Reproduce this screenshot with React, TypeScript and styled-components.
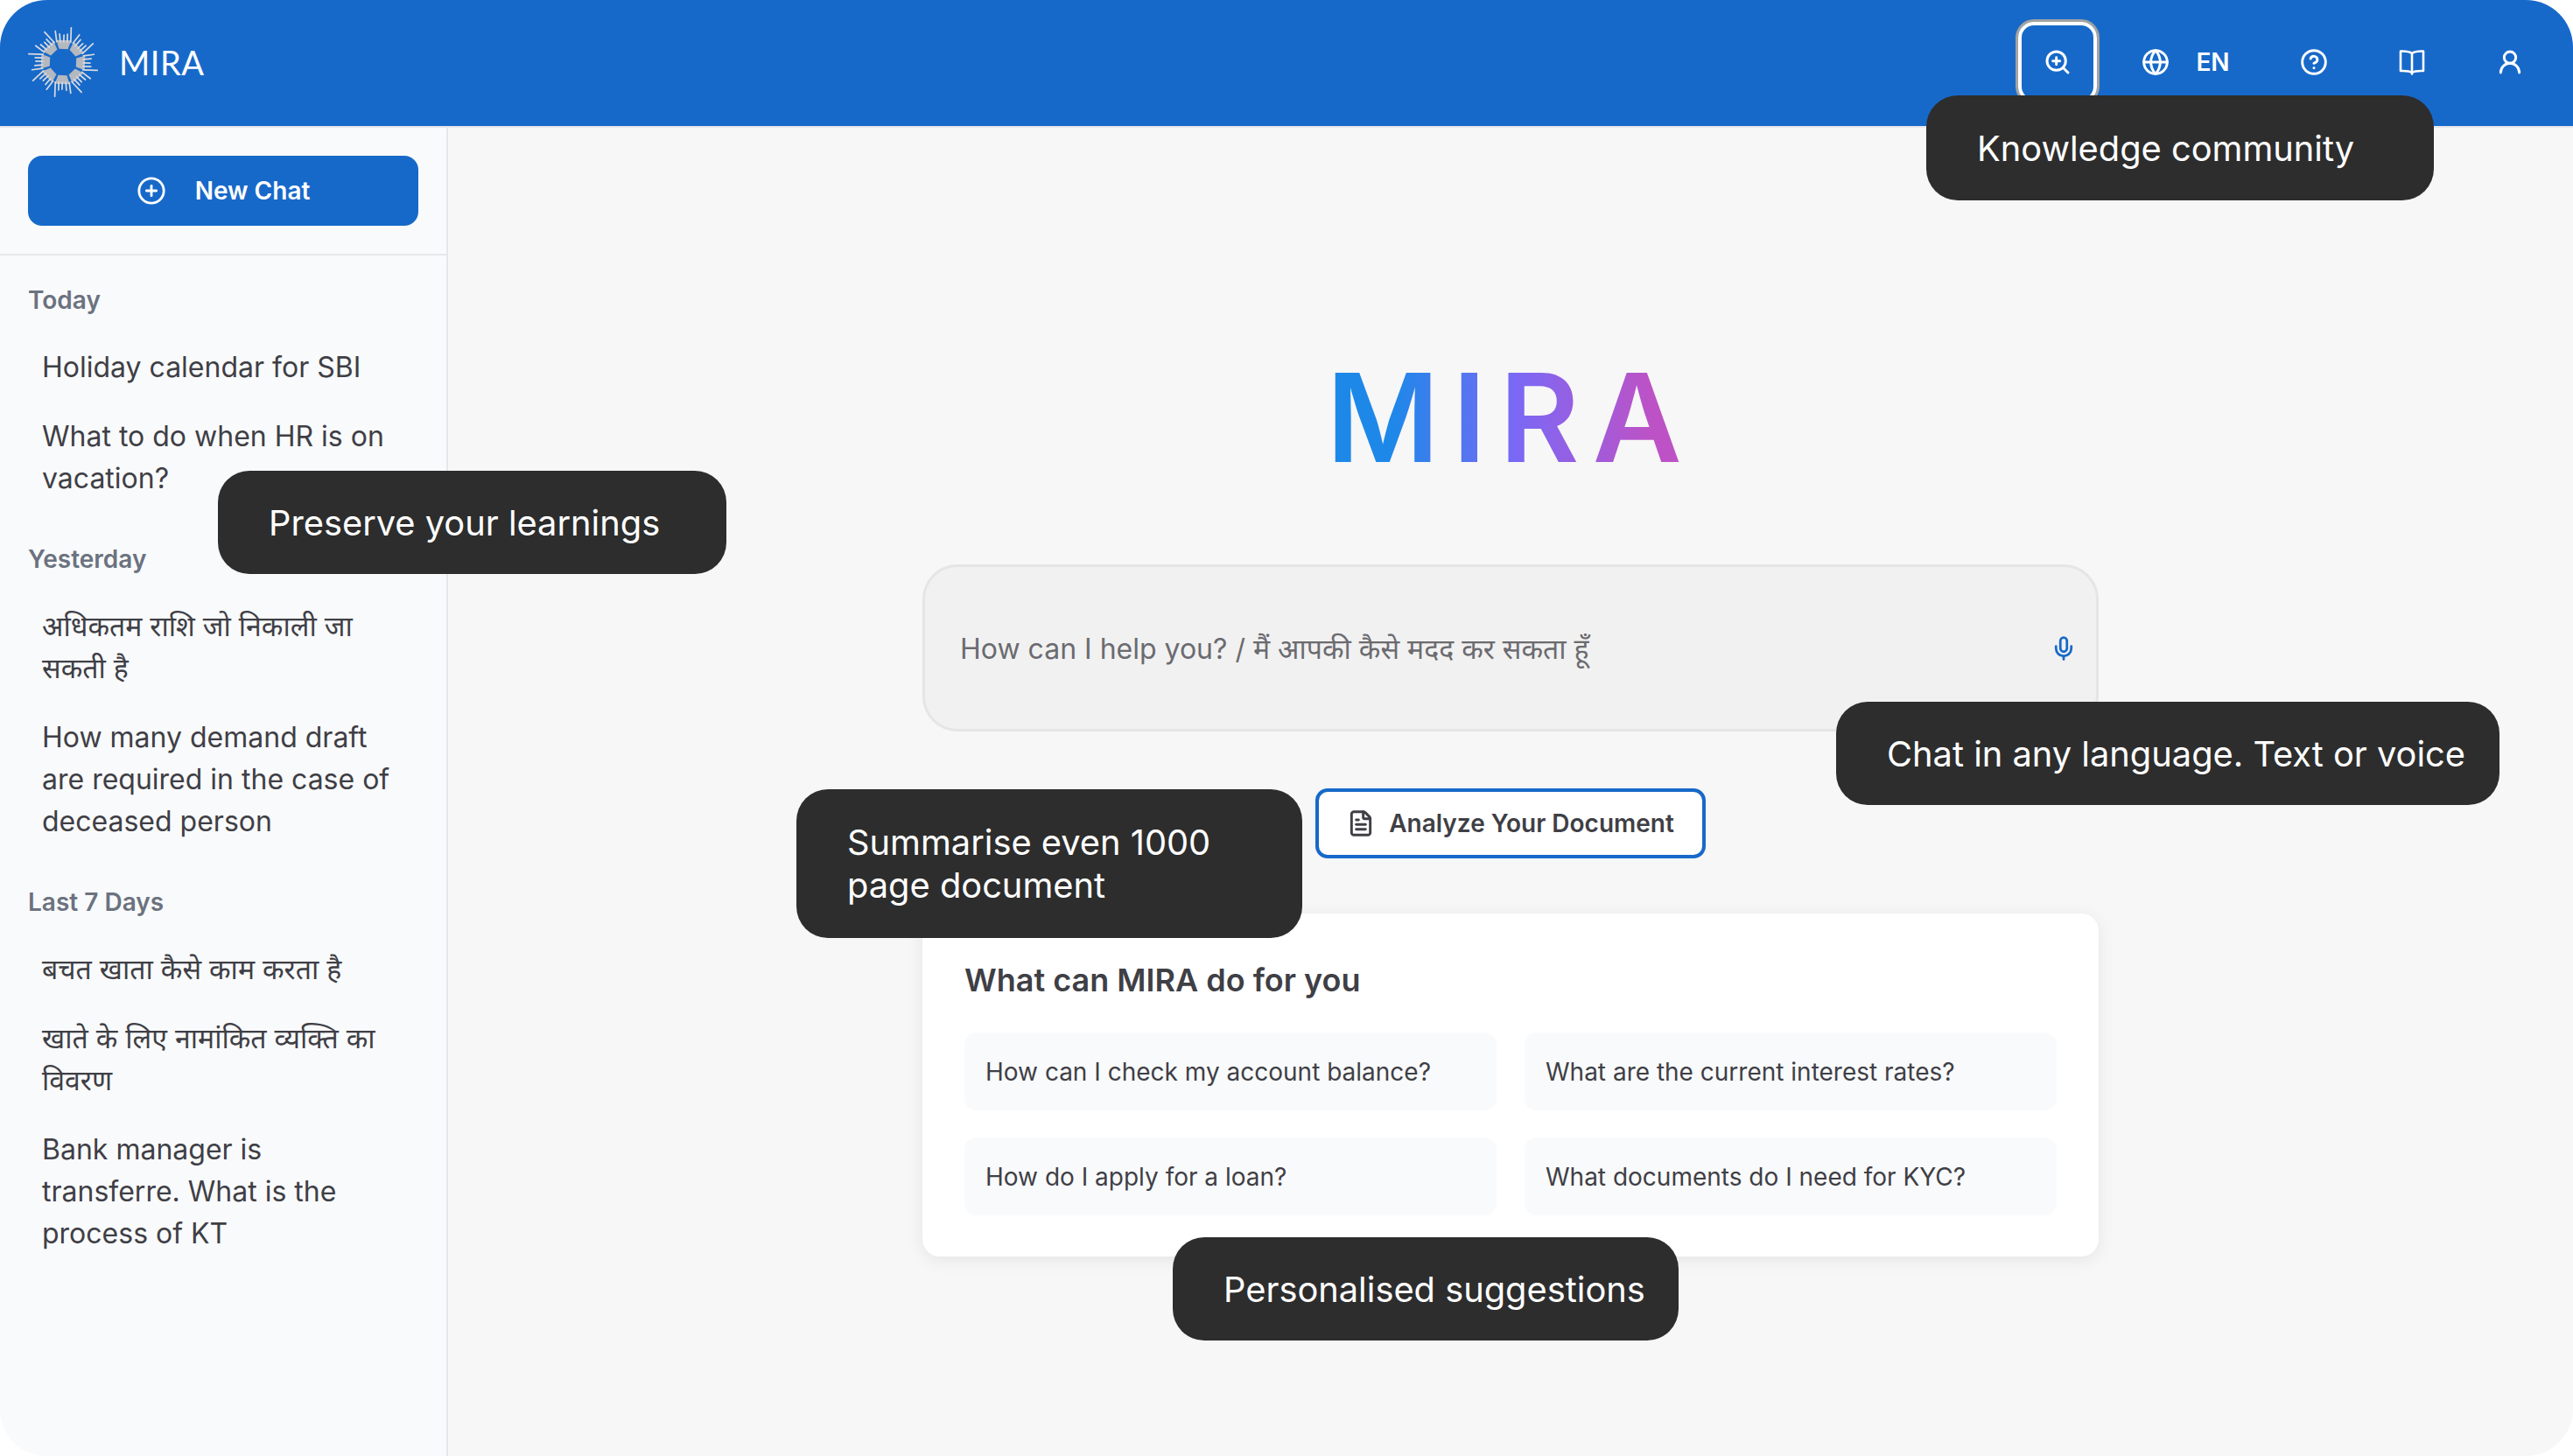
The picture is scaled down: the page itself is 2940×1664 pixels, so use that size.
import styled, { createGlobalStyle } from "styled-components";
import {
  CirclePlus,
  CircleHelp,
  FileText,
  Globe,
  Mic,
  UserRound,
  ZoomIn,
} from "lucide-react";

const GlobalStyle = createGlobalStyle`
  html, body {
    margin: 0;
    padding: 0;
    background: #ffffff;
  }
  * {
    box-sizing: border-box;
  }
`;

const Frame = styled.div`
  position: relative;
  width: 2940px;
  height: 1664px;
  border-radius: 54px;
  overflow: hidden;
  display: flex;
  flex-direction: column;
  background: #f7f7f7;
  font-family: Inter, "Noto Sans", "Noto Sans Devanagari", "Liberation Sans", sans-serif;
  color: #3f3f46;
`;

const Header = styled.header`
  height: 146px;
  flex: none;
  background: #1769c9;
  border-bottom: 2px solid #e5e7eb;
  display: flex;
  align-items: center;
  justify-content: space-between;
  padding: 0 26px 2px 32px;
`;

const Brand = styled.div`
  display: flex;
  align-items: center;
  gap: 24px;
`;

const BrandName = styled.span`
  font-family: Lato, sans-serif;
  font-size: 38px;
  font-weight: 400;
  line-height: 1;
  letter-spacing: 0.5px;
  color: #ffffff;
`;

const Nav = styled.nav`
  display: flex;
  align-items: center;
  gap: 20px;
`;

const NavButton = styled.button<{ $focused?: boolean; $wide?: boolean }>`
  width: ${(p) => (p.$wide ? "161px" : p.$focused ? "90px" : "92px")};
  height: ${(p) => (p.$focused ? "92px" : "96px")};
  margin: ${(p) => (p.$focused ? "0 1px" : "0")};
  display: flex;
  align-items: center;
  justify-content: center;
  gap: 30px;
  padding: 0;
  background: transparent;
  color: #ffffff;
  font-family: inherit;
  border: 4px solid ${(p) => (p.$focused ? "#ffffff" : "transparent")};
  border-radius: 18px;
  box-shadow: ${(p) => (p.$focused ? "0 0 0 3px #a3a3a3" : "none")};
`;

const LangLabel = styled.span`
  font-size: 28px;
  font-weight: 600;
`;

const Body = styled.div`
  flex: 1;
  min-height: 0;
  display: flex;
`;

const Sidebar = styled.aside`
  width: 512px;
  flex: none;
  background: #f9fafb;
  border-right: 2px solid #e5e7eb;
  display: flex;
  flex-direction: column;
`;

const SidebarTop = styled.div`
  height: 146px;
  padding: 32px 32px 0;
  border-bottom: 2px solid #e5e7eb;
`;

const NewChatButton = styled.button`
  width: 446px;
  height: 80px;
  display: flex;
  align-items: center;
  justify-content: center;
  gap: 33px;
  border: none;
  border-radius: 16px;
  background: #1769c9;
  color: #ffffff;
  font-family: inherit;
  font-size: 28px;
  font-weight: 600;
`;

const History = styled.div`
  padding: 31px 32px 0;
  display: flex;
  flex-direction: column;
  gap: 48px;
`;

const HistoryGroup = styled.section`
  display: flex;
  flex-direction: column;
`;

const GroupLabel = styled.h3`
  margin: 0 0 33px;
  font-size: 28px;
  line-height: 40px;
  font-weight: 600;
  color: #6b7280;
`;

const HistoryList = styled.div`
  display: flex;
  flex-direction: column;
  gap: 31px;
`;

const HistoryItem = styled.div`
  padding: 0 16px;
  font-size: 32px;
  line-height: 48px;
  color: #3f3f46;
`;

const Main = styled.main`
  flex: 1;
  min-width: 0;
  display: flex;
  flex-direction: column;
  align-items: center;
  padding-top: 246px;
`;

const Title = styled.h1`
  margin: 0;
  font-size: 140px;
  line-height: 170px;
  font-weight: 600;
  letter-spacing: 15px;
  background: linear-gradient(90deg, #1e88e9 18%, #7b68f5 52%, #bd52c6 88%);
  -webkit-background-clip: text;
  background-clip: text;
  color: transparent;
`;

const SearchBox = styled.div`
  width: 1344px;
  height: 191px;
  margin-top: 83px;
  padding: 0 22px 0 40px;
  display: flex;
  align-items: center;
  justify-content: space-between;
  background: #f1f1f1;
  border: 3px solid #e5e5e5;
  border-radius: 40px;
  color: #1769c9;
`;

const Placeholder = styled.span`
  font-size: 32px;
  color: #6b6b70;
`;

const AnalyzeButton = styled.button`
  width: 446px;
  height: 80px;
  margin-top: 65px;
  display: flex;
  align-items: center;
  justify-content: center;
  gap: 16px;
  background: #ffffff;
  border: 4px solid #1769c9;
  border-radius: 14px;
  color: #3f3f46;
  font-family: inherit;
  font-size: 28px;
  font-weight: 600;
`;

const SuggestionCard = styled.section`
  width: 1344px;
  height: 392px;
  margin-top: 63px;
  padding: 52px 48px 0;
  background: #ffffff;
  border-radius: 20px;
  box-shadow: 0 4px 20px rgba(0, 0, 0, 0.08);
`;

const CardTitle = styled.h2`
  margin: 0 0 36px;
  font-size: 36px;
  line-height: 48px;
  font-weight: 600;
  color: #3f3f46;
`;

const SuggestionGrid = styled.div`
  display: grid;
  grid-template-columns: 1fr 1fr;
  gap: 31px 32px;
`;

const Suggestion = styled.div`
  height: 89px;
  display: flex;
  align-items: center;
  padding: 0 24px;
  background: #f9fafb;
  border-radius: 14px;
  font-size: 28px;
  color: #3f3f46;
`;

const Tooltip = styled.div<{ $x: number; $y: number; $w: number; $h: number }>`
  position: absolute;
  left: ${(p) => p.$x}px;
  top: ${(p) => p.$y}px;
  width: ${(p) => p.$w}px;
  height: ${(p) => p.$h}px;
  display: flex;
  align-items: center;
  padding: 0 30px 0 58px;
  background: #2d2d2d;
  border-radius: 36px;
  color: #ffffff;
  font-size: 39.8px;
  line-height: 49px;
`;

// logo: eight little hands around a ring
function BrandMark() {
  const angles = [0, 45, 90, 135, 180, 225, 270, 315];
  const fingers = [
    { x1: 32, y1: 17, x2: 30, y2: 5 },
    { x1: 36, y1: 17, x2: 35, y2: 8 },
    { x1: 40, y1: 17, x2: 40, y2: 9 },
    { x1: 44, y1: 17, x2: 44, y2: 8 },
    { x1: 48, y1: 17, x2: 48, y2: 0.5 },
  ];
  return (
    <svg width="80" height="80" viewBox="0 0 80 80">
      {angles.map((a) => (
        <g key={a} transform={`rotate(${a + 2} 40 40)`}>
          <path d="M35 25 L45 25 L48.5 15 L31.5 15 Z" fill="#b4b8bf" />
          {fingers.map((f) => (
            <line
              key={f.x1}
              x1={f.x1}
              y1={f.y1}
              x2={f.x2}
              y2={f.y2}
              stroke="#d8dbe0"
              strokeWidth="1.7"
              strokeLinecap="round"
            />
          ))}
        </g>
      ))}
    </svg>
  );
}

// flat open book, the lucide one is too slanted
function BookIcon() {
  return (
    <svg width="32" height="32" viewBox="0 0 32 32" fill="none" stroke="currentColor" strokeWidth="2.6" strokeLinejoin="round" strokeLinecap="round">
      <path d="M16 6 C13 3.8 8 3.4 3 3.6 V26 C8 25.8 13 26 16 28 C19 26 24 25.8 29 26 V3.6 C24 3.4 19 3.8 16 6 Z" />
      <path d="M16 6 V29.5" />
    </svg>
  );
}

const history = [
  { label: "Today", items: ["Holiday calendar for SBI", "What to do when HR is on vacation?"] },
  {
    label: "Yesterday",
    items: [
      "अधिकतम राशि जो निकाली जा सकती है",
      "How many demand draft are required in the case of deceased person",
    ],
  },
  {
    label: "Last 7 Days",
    items: [
      "बचत खाता कैसे काम करता है",
      "खाते के लिए नामांकित व्यक्ति का विवरण",
      "Bank manager is transferre. What is the process of KT",
    ],
  },
];

const suggestions = [
  "How can I check my account balance?",
  "What are the current interest rates?",
  "How do I apply for a loan?",
  "What documents do I need for KYC?",
];

function App() {
  return (
    <>
      <GlobalStyle />
      <Frame>
        <Header>
          <Brand>
            <BrandMark />
            <BrandName>MIRA</BrandName>
          </Brand>
          <Nav>
            <NavButton $focused>
              <ZoomIn size={32} strokeWidth={2.2} />
            </NavButton>
            <NavButton $wide>
              <Globe size={32} strokeWidth={2.2} />
              <LangLabel>EN</LangLabel>
            </NavButton>
            <NavButton>
              <CircleHelp size={32} strokeWidth={2.2} />
            </NavButton>
            <NavButton>
              <BookIcon />
            </NavButton>
            <NavButton>
              <UserRound size={32} strokeWidth={2.2} />
            </NavButton>
          </Nav>
        </Header>
        <Body>
          <Sidebar>
            <SidebarTop>
              <NewChatButton>
                <CirclePlus size={34} strokeWidth={2} />
                New Chat
              </NewChatButton>
            </SidebarTop>
            <History>
              {history.map((group) => (
                <HistoryGroup key={group.label}>
                  <GroupLabel>{group.label}</GroupLabel>
                  <HistoryList>
                    {group.items.map((item) => (
                      <HistoryItem key={item}>{item}</HistoryItem>
                    ))}
                  </HistoryList>
                </HistoryGroup>
              ))}
            </History>
          </Sidebar>
          <Main>
            <Title>MIRA</Title>
            <SearchBox>
              <Placeholder>How can I help you? / मैं आपकी कैसे मदद कर सकता हूँ</Placeholder>
              <Mic size={30} strokeWidth={2.2} />
            </SearchBox>
            <AnalyzeButton>
              <FileText size={32} strokeWidth={2.2} />
              Analyze Your Document
            </AnalyzeButton>
            <SuggestionCard>
              <CardTitle>What can MIRA do for you</CardTitle>
              <SuggestionGrid>
                {suggestions.map((s) => (
                  <Suggestion key={s}>{s}</Suggestion>
                ))}
              </SuggestionGrid>
            </SuggestionCard>
          </Main>
        </Body>
        <Tooltip $x={2201} $y={109} $w={580} $h={120}>Knowledge community</Tooltip>
        <Tooltip $x={249} $y={538} $w={581} $h={118}>Preserve your learnings</Tooltip>
        <Tooltip $x={2098} $y={802} $w={758} $h={118}>Chat in any language. Text or voice</Tooltip>
        <Tooltip $x={910} $y={902} $w={578} $h={170}>Summarise even 1000 page document</Tooltip>
        <Tooltip $x={1340} $y={1414} $w={578} $h={118}>Personalised suggestions</Tooltip>
      </Frame>
    </>
  );
}

export default App;
